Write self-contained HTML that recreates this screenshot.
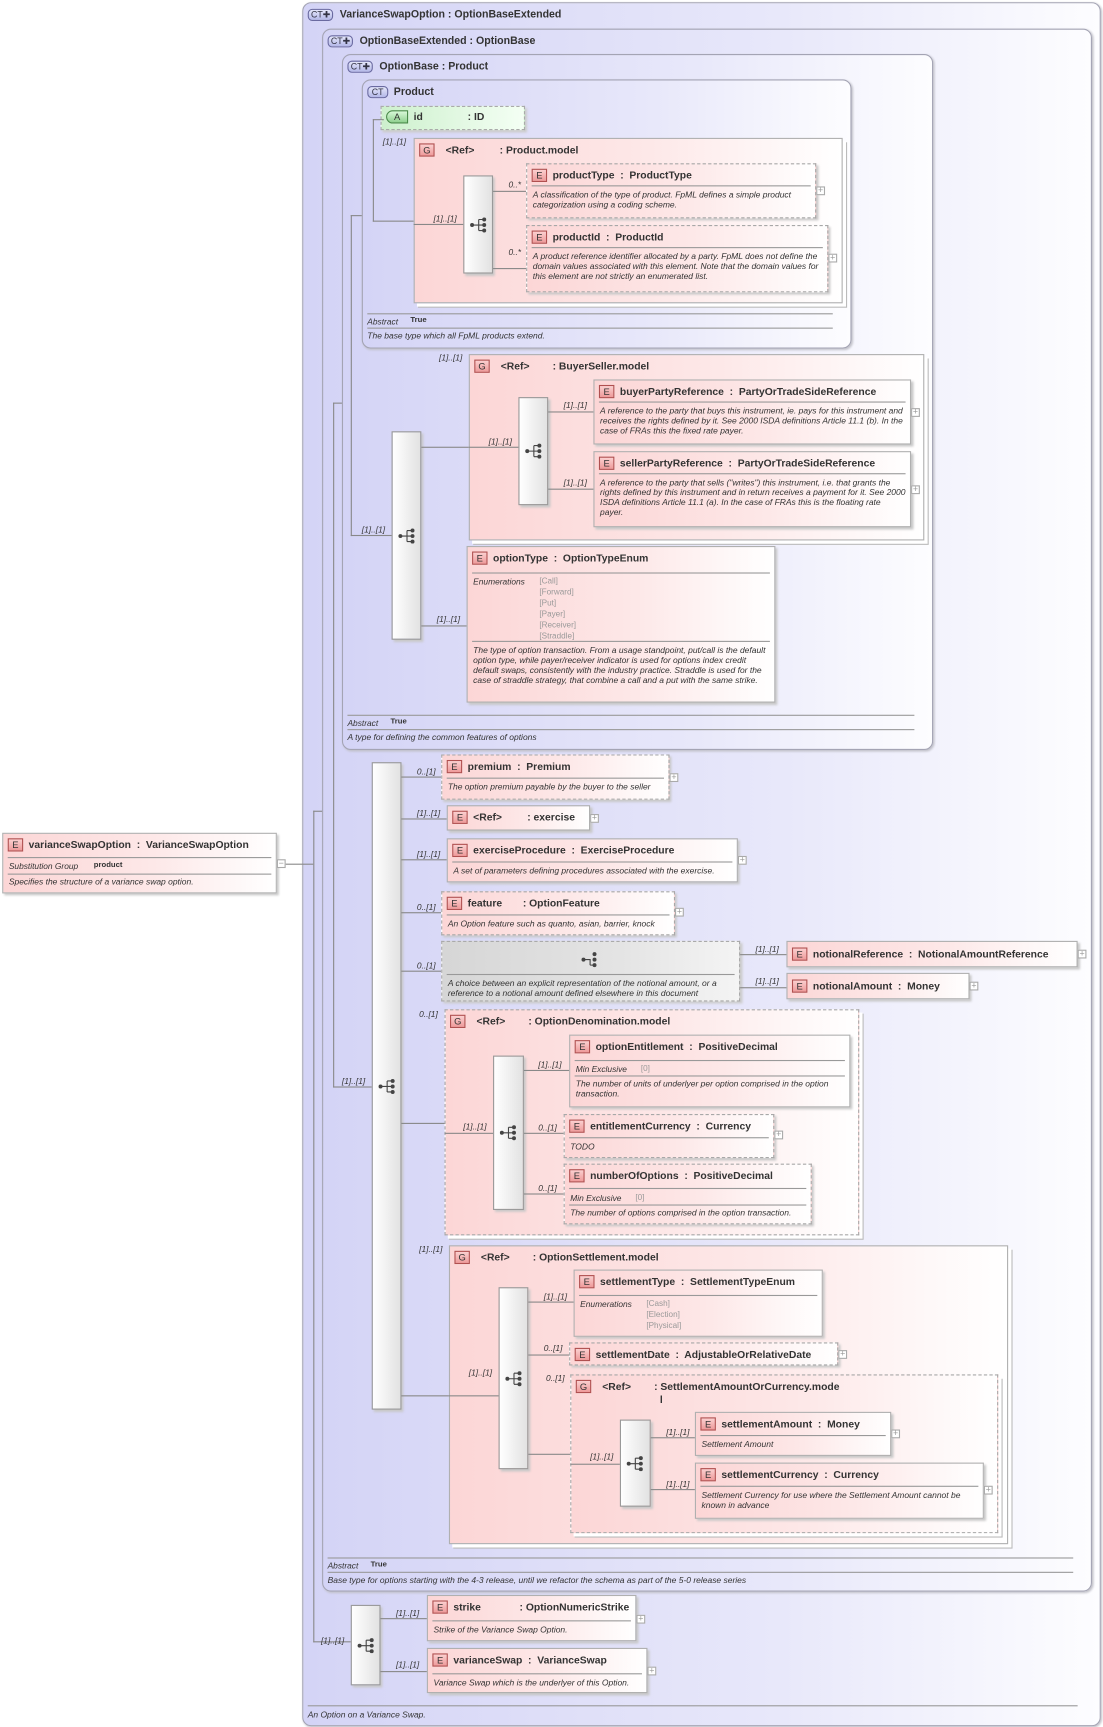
<!DOCTYPE html>
<html><head><meta charset="utf-8"><style>
*{margin:0;padding:0;box-sizing:border-box}
html,body{width:1103px;height:1727px;background:#fff;overflow:hidden}
#w{position:absolute;left:0;top:0;width:1000px;height:1566px;transform:scale(1.103);transform-origin:0 0;font-family:"Liberation Sans",sans-serif;color:#333}
.ct{position:absolute;border:1px solid #a4a4b4;border-radius:8px;background:linear-gradient(to right,#d4d4f6,#e8e8fa 60%,#fdfdff);box-shadow:1px 1px 2px #c0c0c8}
.t{position:absolute;font-size:9.6px;font-weight:bold;color:#333;white-space:nowrap}
.ctb{position:absolute;left:4px;top:5px;height:11px;border:1px solid #6a6aa0;border-radius:4px;background:linear-gradient(#e4e6fa,#b4b8e8);font-size:8px;line-height:9px;padding:0 2px;color:#334}
.e{position:absolute;background:linear-gradient(to right,#fcd6d6,#fde8e8 55%,#fff);border:1px solid #b0b0b0;box-shadow:2px 2px 2px #c8c8c8}
.dd{border:1px dashed #a8a8a8}
.eb{position:absolute;left:4px;top:4px;width:14px;height:12px;border:1px solid #b05050;background:linear-gradient(#fbd0d0,#ee9a9a);font-size:8.5px;line-height:10px;text-align:center;color:#333}
.n{position:absolute;left:23px;top:4px;font-size:9.4px;font-weight:bold;white-space:pre;color:#333}
.hr{position:absolute;left:4px;right:4px;height:1px;background:#999}
.ds{position:absolute;left:5px;right:4px;font-size:7.7px;font-style:italic;line-height:9px;color:#333}
.seq{position:absolute;border:1px solid #999;background:linear-gradient(to right,#fff,#e2e2e2);box-shadow:2px 2px 2px #c8c8c8}
.seq svg{position:absolute;left:50%;top:50%;margin:-7px 0 0 -8px}
.l{position:absolute;background:#888}
.lb{position:absolute;font-size:7.6px;font-style:italic;white-space:nowrap;color:#333}
.tr{position:absolute;font-size:7px;font-weight:bold;white-space:nowrap;color:#333}
.p{position:absolute;width:8px;height:8px;border:1px solid #aaa;font-size:8px;line-height:6px;text-align:center;color:#999;background:#fff}
.en{position:absolute;font-size:7.4px;color:#999;line-height:10px;font-family:"Liberation Sans",sans-serif}
</style></head><body><div id="w">

<div class="ct" style="left:274px;top:2px;width:724px;height:1563px"><span class="ctb">CT✚</span><span class="t" style="left:33px;top:5px">VarianceSwapOption : OptionBaseExtended</span>
<div class="hr" style="top:1543px;left:4px;right:20px"></div><div class="ds" style="top:1547px;left:4px">An Option on a Variance Swap.</div></div>

<div class="ct" style="left:292px;top:26px;width:698px;height:1417px"><span class="ctb">CT✚</span><span class="t" style="left:33px;top:5px">OptionBaseExtended : OptionBase</span>
<div class="hr" style="top:1385px;left:4px;right:16px"></div><div class="lb" style="top:1388px;left:4px">Abstract</div><div class="tr" style="top:1388px;left:43px">True</div>
<div class="hr" style="top:1398px;left:4px;right:16px"></div><div class="ds" style="top:1401px;left:4px">Base type for options starting with the 4-3 release, until we refactor the schema as part of the 5-0 release series</div></div>

<div class="ct" style="left:310px;top:49px;width:536px;height:631px"><span class="ctb">CT✚</span><span class="t" style="left:33px;top:5px">OptionBase : Product</span>
<div class="hr" style="top:598px;left:4px;right:16px"></div><div class="lb" style="top:601px;left:4px">Abstract</div><div class="tr" style="top:601px;left:43px">True</div>
<div class="hr" style="top:611px;left:4px;right:16px"></div><div class="ds" style="top:614px;left:4px">A type for defining the common features of options</div></div>

<div class="ct" style="left:328px;top:72px;width:444px;height:244px"><span class="ctb" style="padding:0 3px">CT</span><span class="t" style="left:28px;top:5px">Product</span>
<div class="hr" style="top:211px;left:4px;right:16px"></div><div class="lb" style="top:214px;left:4px">Abstract</div><div class="tr" style="top:214px;left:43px">True</div>
<div class="hr" style="top:224px;left:4px;right:16px"></div><div class="ds" style="top:227px;left:4px">The base type which all FpML products extend.</div></div>

<div style="position:absolute;left:345px;top:96px;width:131px;height:22px;border:1px dashed #aaa;background:linear-gradient(to right,#cdf0cd,#f4fff4);box-shadow:2px 2px 2px #ccc"></div>
<div style="position:absolute;left:350px;top:100px;width:20px;height:12px;border:1px solid #4a8a4a;border-radius:6px 0 0 6px;background:linear-gradient(#d8f8d8,#8fd08f);font-size:8.5px;line-height:10px;text-align:center">A</div>
<span class="n" style="left:375px;top:100px">id</span><span class="n" style="left:424px;top:100px">: ID</span>

<div class="l" style="left:258px;top:783px;width:26px;height:1px"></div>
<div class="l" style="left:284px;top:735px;width:1px;height:754px"></div>
<div class="l" style="left:284px;top:735px;width:8px;height:1px"></div>
<div class="l" style="left:284px;top:1488px;width:34px;height:1px"></div>
<div class="l" style="left:302px;top:365px;width:1px;height:621px"></div>
<div class="l" style="left:302px;top:365px;width:8px;height:1px"></div>
<div class="l" style="left:302px;top:985px;width:35px;height:1px"></div>
<div class="l" style="left:318px;top:195px;width:1px;height:291px"></div>
<div class="l" style="left:318px;top:195px;width:10px;height:1px"></div>
<div class="l" style="left:318px;top:485px;width:37px;height:1px"></div>
<div class="l" style="left:338px;top:108px;width:1px;height:93px"></div>
<div class="l" style="left:338px;top:108px;width:10px;height:1px"></div>
<div class="l" style="left:338px;top:200px;width:37px;height:1px"></div>

<div class="e" style="left:375px;top:125px;width:389px;height:150px;box-shadow:3px 3px 0 #fff,4px 4px 0 #bbb"><span class="eb">G</span><span class="n" style="left:28px">&lt;Ref&gt;</span><span class="n" style="left:77px">: Product.model</span></div>
<div class="l" style="left:375px;top:203px;width:45px;height:1px"></div>
<div class="lb" style="left:393px;top:194px">[1]..[1]</div>
<div class="lb" style="left:347px;top:124px">[1]..[1]</div>
<div class="seq" style="left:420px;top:159px;width:27px;height:89px"><svg width="16" height="14" viewBox="0 0 16 14"><circle cx="2" cy="7" r="1.8" fill="#444"/><path d="M2 7H8M8 2V12M8 2H12M8 7H12M8 12H12" stroke="#444" fill="none"/><circle cx="13" cy="2" r="1.8" fill="#444"/><circle cx="13" cy="7" r="1.8" fill="#444"/><circle cx="13" cy="12" r="1.8" fill="#444"/></svg></div>
<div class="l" style="left:447px;top:173px;width:30px;height:1px"></div>
<div class="l" style="left:447px;top:243px;width:30px;height:1px"></div>
<div class="lb" style="left:461px;top:163px">0..*</div>
<div class="lb" style="left:461px;top:224px">0..*</div>
<div class="e dd" style="left:477px;top:148px;width:263px;height:50px"><span class="eb">E</span><span class="n">productType  :  ProductType</span><div class="hr" style="top:19px"></div><div class="ds" style="top:23px">A classification of the type of product. FpML defines a simple product categorization using a coding scheme.</div></div>
<div class="p" style="left:740px;top:169px">+</div>
<div class="e dd" style="left:477px;top:204px;width:274px;height:61px"><span class="eb">E</span><span class="n">productId  :  ProductId</span><div class="hr" style="top:19px"></div><div class="ds" style="top:23px">A product reference identifier allocated by a party. FpML does not define the domain values associated with this element. Note that the domain values for this element are not strictly an enumerated list.</div></div>
<div class="p" style="left:751px;top:230px">+</div>

<div class="seq" style="left:355px;top:391px;width:27px;height:189px"><svg width="16" height="14" viewBox="0 0 16 14"><circle cx="2" cy="7" r="1.8" fill="#444"/><path d="M2 7H8M8 2V12M8 2H12M8 7H12M8 12H12" stroke="#444" fill="none"/><circle cx="13" cy="2" r="1.8" fill="#444"/><circle cx="13" cy="7" r="1.8" fill="#444"/><circle cx="13" cy="12" r="1.8" fill="#444"/></svg></div>
<div class="lb" style="left:328px;top:476px">[1]..[1]</div>
<div class="l" style="left:382px;top:405px;width:43px;height:1px"></div>
<div class="l" style="left:382px;top:567px;width:41px;height:1px"></div>
<div class="lb" style="left:398px;top:320px">[1]..[1]</div>
<div class="lb" style="left:396px;top:557px">[1]..[1]</div>

<div class="e" style="left:425px;top:321px;width:413px;height:169px;box-shadow:3px 3px 0 #fff,4px 4px 0 #bbb"><span class="eb">G</span><span class="n" style="left:28px">&lt;Ref&gt;</span><span class="n" style="left:75px">: BuyerSeller.model</span></div>
<div class="l" style="left:425px;top:405px;width:45px;height:1px"></div>
<div class="lb" style="left:443px;top:396px">[1]..[1]</div>
<div class="seq" style="left:470px;top:360px;width:27px;height:98px"><svg width="16" height="14" viewBox="0 0 16 14"><circle cx="2" cy="7" r="1.8" fill="#444"/><path d="M2 7H8M8 2V12M8 2H12M8 7H12M8 12H12" stroke="#444" fill="none"/><circle cx="13" cy="2" r="1.8" fill="#444"/><circle cx="13" cy="7" r="1.8" fill="#444"/><circle cx="13" cy="12" r="1.8" fill="#444"/></svg></div>
<div class="l" style="left:497px;top:373px;width:41px;height:1px"></div>
<div class="l" style="left:497px;top:443px;width:41px;height:1px"></div>
<div class="lb" style="left:511px;top:363px">[1]..[1]</div>
<div class="lb" style="left:511px;top:433px">[1]..[1]</div>
<div class="e" style="left:538px;top:344px;width:288px;height:59px"><span class="eb">E</span><span class="n">buyerPartyReference  :  PartyOrTradeSideReference</span><div class="hr" style="top:19px"></div><div class="ds" style="top:23px">A reference to the party that buys this instrument, ie. pays for this instrument and receives the rights defined by it. See 2000 ISDA definitions Article 11.1 (b). In the case of FRAs this the fixed rate payer.</div></div>
<div class="p" style="left:826px;top:370px">+</div>
<div class="e" style="left:538px;top:409px;width:288px;height:69px"><span class="eb">E</span><span class="n">sellerPartyReference  :  PartyOrTradeSideReference</span><div class="hr" style="top:19px"></div><div class="ds" style="top:23px">A reference to the party that sells ("writes") this instrument, i.e. that grants the rights defined by this instrument and in return receives a payment for it. See 2000 ISDA definitions Article 11.1 (a). In the case of FRAs this is the floating rate payer.</div></div>
<div class="p" style="left:826px;top:440px">+</div>

<div class="e" style="left:423px;top:495px;width:280px;height:142px"><span class="eb">E</span><span class="n">optionType  :  OptionTypeEnum</span><div class="hr" style="top:23px"></div>
<div class="lb" style="left:5px;top:27px">Enumerations</div>
<div class="en" style="left:65px;top:26px">[Call]<br>[Forward]<br>[Put]<br>[Payer]<br>[Receiver]<br>[Straddle]</div>
<div class="hr" style="top:85px"></div><div class="ds" style="top:89px">The type of option transaction. From a usage standpoint, put/call is the default option type, while payer/receiver indicator is used for options index credit default swaps, consistently with the industry practice. Straddle is used for the case of straddle strategy, that combine a call and a put with the same strike.</div></div>

<div class="e" style="left:2px;top:755px;width:249px;height:55px"><span class="eb">E</span><span class="n">varianceSwapOption  :  VarianceSwapOption</span><div class="hr" style="top:21px"></div>
<div class="lb" style="left:5px;top:25px">Substitution Group</div><div class="tr" style="left:82px;top:25px">product</div>
<div class="hr" style="top:36px"></div><div class="ds" style="top:39px">Specifies the structure of a variance swap option.</div></div>
<div class="p" style="left:251px;top:779px;line-height:5px">−</div>

<div class="seq" style="left:337px;top:691px;width:27px;height:587px"><svg width="16" height="14" viewBox="0 0 16 14"><circle cx="2" cy="7" r="1.8" fill="#444"/><path d="M2 7H8M8 2V12M8 2H12M8 7H12M8 12H12" stroke="#444" fill="none"/><circle cx="13" cy="2" r="1.8" fill="#444"/><circle cx="13" cy="7" r="1.8" fill="#444"/><circle cx="13" cy="12" r="1.8" fill="#444"/></svg></div>
<div class="lb" style="left:310px;top:976px">[1]..[1]</div>
<div class="l" style="left:364px;top:704px;width:36px;height:1px"></div>
<div class="l" style="left:364px;top:742px;width:41px;height:1px"></div>
<div class="l" style="left:364px;top:779px;width:41px;height:1px"></div>
<div class="l" style="left:364px;top:827px;width:36px;height:1px"></div>
<div class="l" style="left:364px;top:880px;width:36px;height:1px"></div>
<div class="l" style="left:364px;top:1018px;width:39px;height:1px"></div>
<div class="l" style="left:364px;top:1265px;width:43px;height:1px"></div>
<div class="lb" style="left:378px;top:695px">0..[1]</div>
<div class="lb" style="left:378px;top:733px">[1]..[1]</div>
<div class="lb" style="left:378px;top:770px">[1]..[1]</div>
<div class="lb" style="left:378px;top:818px">0..[1]</div>
<div class="lb" style="left:378px;top:871px">0..[1]</div>
<div class="lb" style="left:380px;top:915px">0..[1]</div>
<div class="lb" style="left:380px;top:1128px">[1]..[1]</div>

<div class="e dd" style="left:400px;top:684px;width:207px;height:41px"><span class="eb">E</span><span class="n">premium  :  Premium</span><div class="hr" style="top:20px"></div><div class="ds" style="top:24px">The option premium payable by the buyer to the seller</div></div>
<div class="p" style="left:607px;top:701px">+</div>
<div class="e" style="left:405px;top:730px;width:130px;height:23px"><span class="eb">E</span><span class="n">&lt;Ref&gt;</span><span class="n" style="left:72px">: exercise</span></div>
<div class="p" style="left:535px;top:738px">+</div>
<div class="e" style="left:405px;top:760px;width:264px;height:40px"><span class="eb">E</span><span class="n">exerciseProcedure  :  ExerciseProcedure</span><div class="hr" style="top:20px"></div><div class="ds" style="top:24px">A set of parameters defining procedures associated with the exercise.</div></div>
<div class="p" style="left:669px;top:776px">+</div>
<div class="e dd" style="left:400px;top:808px;width:212px;height:40px"><span class="eb">E</span><span class="n">feature</span><span class="n" style="left:73px">: OptionFeature</span><div class="hr" style="top:20px"></div><div class="ds" style="top:24px">An Option feature such as quanto, asian, barrier, knock</div></div>
<div class="p" style="left:612px;top:823px">+</div>

<div style="position:absolute;left:400px;top:853px;width:271px;height:55px;border:1px dashed #aaa;background:linear-gradient(to right,#d6d6d6,#e4e4e4 60%,#f4f4f4);box-shadow:2px 2px 2px #ccc">
<svg style="position:absolute;left:126px;top:8px" width="16" height="16" viewBox="0 0 16 16"><circle cx="2" cy="8" r="1.8" fill="#444"/><path d="M2 8H8V13M8 13H12" stroke="#444" fill="none"/><circle cx="12" cy="3" r="1.8" fill="#444"/><circle cx="12" cy="8" r="1.8" fill="#444"/><circle cx="12" cy="13" r="1.8" fill="#444"/></svg>
<div class="hr" style="top:29px"></div><div class="ds" style="top:33px">A choice between an explicit representation of the notional amount, or a reference to a notional amount defined elsewhere in this document</div></div>
<div class="l" style="left:671px;top:865px;width:42px;height:1px"></div>
<div class="l" style="left:671px;top:895px;width:42px;height:1px"></div>
<div class="lb" style="left:685px;top:856px">[1]..[1]</div>
<div class="lb" style="left:685px;top:885px">[1]..[1]</div>
<div class="e" style="left:713px;top:853px;width:264px;height:24px"><span class="eb" style="top:5px">E</span><span class="n" style="top:5px">notionalReference  :  NotionalAmountReference</span></div>
<div class="p" style="left:977px;top:861px">+</div>
<div class="e" style="left:713px;top:882px;width:166px;height:24px"><span class="eb" style="top:5px">E</span><span class="n" style="top:5px">notionalAmount  :  Money</span></div>
<div class="p" style="left:879px;top:890px">+</div>

<div class="e dd" style="left:403px;top:915px;width:376px;height:205px;box-shadow:3px 3px 0 #fff,4px 4px 0 #bbb"><span class="eb">G</span><span class="n" style="left:28px">&lt;Ref&gt;</span><span class="n" style="left:75px">: OptionDenomination.model</span></div>
<div class="l" style="left:403px;top:1027px;width:44px;height:1px"></div>
<div class="lb" style="left:420px;top:1017px">[1]..[1]</div>
<div class="seq" style="left:447px;top:957px;width:28px;height:140px"><svg width="16" height="14" viewBox="0 0 16 14"><circle cx="2" cy="7" r="1.8" fill="#444"/><path d="M2 7H8M8 2V12M8 2H12M8 7H12M8 12H12" stroke="#444" fill="none"/><circle cx="13" cy="2" r="1.8" fill="#444"/><circle cx="13" cy="7" r="1.8" fill="#444"/><circle cx="13" cy="12" r="1.8" fill="#444"/></svg></div>
<div class="l" style="left:475px;top:970px;width:41px;height:1px"></div>
<div class="l" style="left:475px;top:1027px;width:36px;height:1px"></div>
<div class="l" style="left:475px;top:1082px;width:36px;height:1px"></div>
<div class="lb" style="left:488px;top:961px">[1]..[1]</div>
<div class="lb" style="left:488px;top:1018px">0..[1]</div>
<div class="lb" style="left:488px;top:1073px">0..[1]</div>
<div class="e" style="left:516px;top:938px;width:255px;height:66px"><span class="eb">E</span><span class="n">optionEntitlement  :  PositiveDecimal</span><div class="hr" style="top:22px"></div>
<div class="lb" style="left:5px;top:26px">Min Exclusive</div><div class="en" style="left:64px;top:25px">[0]</div>
<div class="hr" style="top:36px"></div><div class="ds" style="top:39px">The number of units of underlyer per option comprised in the option transaction.</div></div>
<div class="e dd" style="left:511px;top:1010px;width:191px;height:40px"><span class="eb">E</span><span class="n">entitlementCurrency  :  Currency</span><div class="hr" style="top:20px"></div><div class="ds" style="top:24px">TODO</div></div>
<div class="p" style="left:702px;top:1025px">+</div>
<div class="e dd" style="left:511px;top:1055px;width:225px;height:55px"><span class="eb">E</span><span class="n">numberOfOptions  :  PositiveDecimal</span><div class="hr" style="top:21px"></div>
<div class="lb" style="left:5px;top:26px">Min Exclusive</div><div class="en" style="left:64px;top:25px">[0]</div>
<div class="hr" style="top:36px"></div><div class="ds" style="top:39px">The number of options comprised in the option transaction.</div></div>

<div class="e" style="left:407px;top:1129px;width:507px;height:271px;box-shadow:3px 3px 0 #fff,4px 4px 0 #bbb"><span class="eb">G</span><span class="n" style="left:28px">&lt;Ref&gt;</span><span class="n" style="left:75px">: OptionSettlement.model</span></div>
<div class="l" style="left:407px;top:1265px;width:45px;height:1px"></div>
<div class="lb" style="left:425px;top:1240px">[1]..[1]</div>
<div class="seq" style="left:452px;top:1167px;width:27px;height:165px"><svg width="16" height="14" viewBox="0 0 16 14"><circle cx="2" cy="7" r="1.8" fill="#444"/><path d="M2 7H8M8 2V12M8 2H12M8 7H12M8 12H12" stroke="#444" fill="none"/><circle cx="13" cy="2" r="1.8" fill="#444"/><circle cx="13" cy="7" r="1.8" fill="#444"/><circle cx="13" cy="12" r="1.8" fill="#444"/></svg></div>
<div class="l" style="left:479px;top:1180px;width:41px;height:1px"></div>
<div class="l" style="left:479px;top:1228px;width:37px;height:1px"></div>
<div class="l" style="left:479px;top:1318px;width:38px;height:1px"></div>
<div class="lb" style="left:493px;top:1171px">[1]..[1]</div>
<div class="lb" style="left:493px;top:1218px">0..[1]</div>
<div class="lb" style="left:495px;top:1245px">0..[1]</div>
<div class="e" style="left:520px;top:1151px;width:226px;height:61px"><span class="eb">E</span><span class="n">settlementType  :  SettlementTypeEnum</span><div class="hr" style="top:22px"></div>
<div class="lb" style="left:5px;top:26px">Enumerations</div><div class="en" style="left:65px;top:25px">[Cash]<br>[Election]<br>[Physical]</div></div>
<div class="e dd" style="left:516px;top:1217px;width:244px;height:21px"><span class="eb" style="top:4px">E</span><span class="n" style="top:4px">settlementDate  :  AdjustableOrRelativeDate</span></div>
<div class="p" style="left:760px;top:1224px">+</div>

<div class="e dd" style="left:517px;top:1246px;width:388px;height:144px;box-shadow:3px 3px 0 #fff,4px 4px 0 #bbb"><span class="eb">G</span><span class="n" style="left:28px">&lt;Ref&gt;</span><span class="n" style="left:75px;line-height:12px">: SettlementAmountOrCurrency.mode
  l</span></div>
<div class="l" style="left:517px;top:1327px;width:45px;height:1px"></div>
<div class="lb" style="left:535px;top:1316px">[1]..[1]</div>
<div class="seq" style="left:562px;top:1287px;width:28px;height:79px"><svg width="16" height="14" viewBox="0 0 16 14"><circle cx="2" cy="7" r="1.8" fill="#444"/><path d="M2 7H8M8 2V12M8 2H12M8 7H12M8 12H12" stroke="#444" fill="none"/><circle cx="13" cy="2" r="1.8" fill="#444"/><circle cx="13" cy="7" r="1.8" fill="#444"/><circle cx="13" cy="12" r="1.8" fill="#444"/></svg></div>
<div class="l" style="left:590px;top:1303px;width:40px;height:1px"></div>
<div class="l" style="left:590px;top:1350px;width:40px;height:1px"></div>
<div class="lb" style="left:604px;top:1294px">[1]..[1]</div>
<div class="lb" style="left:604px;top:1341px">[1]..[1]</div>
<div class="e" style="left:630px;top:1280px;width:178px;height:40px"><span class="eb">E</span><span class="n">settlementAmount  :  Money</span><div class="hr" style="top:20px"></div><div class="ds" style="top:24px">Settlement Amount</div></div>
<div class="p" style="left:808px;top:1296px">+</div>
<div class="e" style="left:630px;top:1326px;width:262px;height:51px"><span class="eb">E</span><span class="n">settlementCurrency  :  Currency</span><div class="hr" style="top:20px"></div><div class="ds" style="top:24px">Settlement Currency for use where the Settlement Amount cannot be known in advance</div></div>
<div class="p" style="left:892px;top:1347px">+</div>

<div class="seq" style="left:318px;top:1455px;width:27px;height:73px"><svg width="16" height="14" viewBox="0 0 16 14"><circle cx="2" cy="7" r="1.8" fill="#444"/><path d="M2 7H8M8 2V12M8 2H12M8 7H12M8 12H12" stroke="#444" fill="none"/><circle cx="13" cy="2" r="1.8" fill="#444"/><circle cx="13" cy="7" r="1.8" fill="#444"/><circle cx="13" cy="12" r="1.8" fill="#444"/></svg></div>
<div class="lb" style="left:291px;top:1483px">[1]..[1]</div>
<div class="l" style="left:345px;top:1467px;width:42px;height:1px"></div>
<div class="l" style="left:345px;top:1515px;width:42px;height:1px"></div>
<div class="lb" style="left:359px;top:1458px">[1]..[1]</div>
<div class="lb" style="left:359px;top:1505px">[1]..[1]</div>
<div class="e" style="left:387px;top:1446px;width:190px;height:42px"><span class="eb">E</span><span class="n">strike</span><span class="n" style="left:83px">: OptionNumericStrike</span><div class="hr" style="top:22px"></div><div class="ds" style="top:26px">Strike of the Variance Swap Option.</div></div>
<div class="p" style="left:577px;top:1464px">+</div>
<div class="e" style="left:387px;top:1494px;width:200px;height:41px"><span class="eb">E</span><span class="n">varianceSwap  :  VarianceSwap</span><div class="hr" style="top:22px"></div><div class="ds" style="top:26px">Variance Swap which is the underlyer of this Option.</div></div>
<div class="p" style="left:587px;top:1511px">+</div>

</div></body></html>
